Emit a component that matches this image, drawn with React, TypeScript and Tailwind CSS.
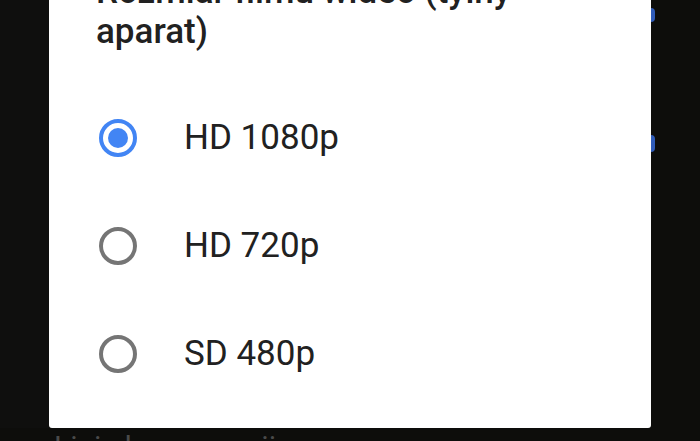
const OPTIONS = ['HD 1080p', 'HD 720p', 'SD 480p'];

function Radio({ checked }: { checked: boolean }) {
  return (
    <svg width="38" height="38" viewBox="0 0 38 38" className="shrink-0">
      <circle cx="19" cy="19" r="17" fill="none" stroke={checked ? '#4285f4' : '#757575'} strokeWidth="4" />
      {checked && <circle cx="19" cy="19" r="10" fill="#4285f4" />}
    </svg>
  );
}

export default function App() {
  const selected = 0;

  return (
    <div
      className="w-[700px] h-[441px] overflow-hidden bg-[#0d0d0b] flex flex-col justify-end"
      style={{ fontFamily: 'Roboto, "Noto Sans", sans-serif' }}
    >
      <div className="flex shrink-0">
        <div className="w-[49px] bg-[#0f0f0e]" />
        <div className="w-[602px] bg-white rounded-b-[3px] pt-6 pb-[20px]">
          <h2 className="px-[47px] text-[35px] leading-[40px] font-medium text-[#212121] mb-[32px]">
            Rozmiar filmu wideo (tylny aparat)
          </h2>
          <div className="flex flex-col">
            {OPTIONS.map((label, i) => (
              <div key={label} className="h-[108px] flex items-center pl-[50px]">
                <Radio checked={i === selected} />
                <span className="ml-[47px] text-[35px] text-[#212121]">{label}</span>
              </div>
            ))}
          </div>
        </div>
        <div className="w-[49px] flex flex-col pt-[60px]">
          <div className="w-[4px] h-[14px] rounded-r-full bg-[#2f5bb8]" />
          <div className="w-[4px] h-[17px] mt-[113px] rounded-r-full bg-[#2f5bb8]" />
        </div>
      </div>
      <div className="h-[13px] shrink-0 overflow-hidden pl-[54px] pt-[4px]">
        <div className="text-[30px] leading-none text-[#4a4a4a]">Linie kompozycji</div>
      </div>
    </div>
  );
}
